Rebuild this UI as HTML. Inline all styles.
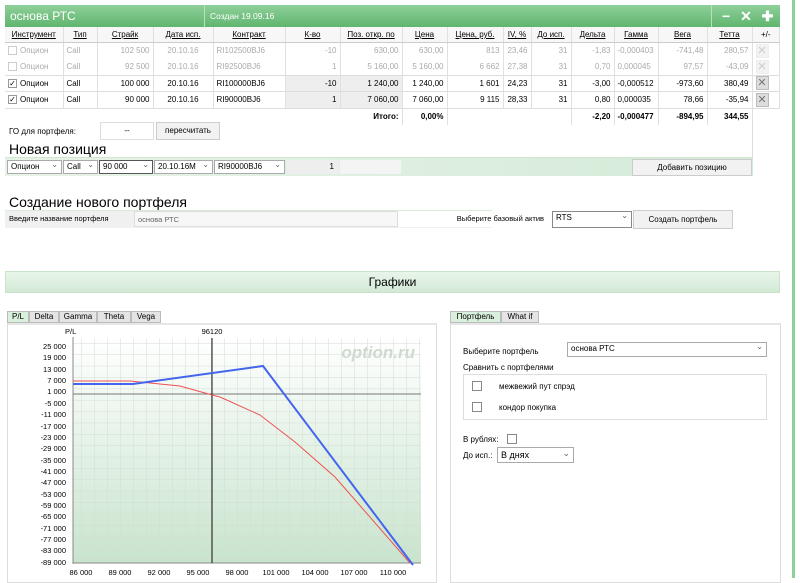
<!DOCTYPE html>
<html><head><meta charset="utf-8"><style>
*{box-sizing:border-box;margin:0;padding:0}
body{width:800px;height:578px;background:#fff;font-family:"Liberation Sans",sans-serif;font-size:8px;color:#000;position:relative;overflow:hidden}
.a{position:absolute}
.hdr{left:5px;top:5px;width:775px;height:22px;background:linear-gradient(#8fd09a,#5fb56e);color:#fff}
table{border-collapse:collapse;position:absolute;left:5px;top:27px;width:775px;font-size:8px}
td,th{border-right:1px solid #e0e0e0;padding:0 3px;height:16.5px;white-space:nowrap}
th{font-weight:normal;text-decoration:underline;text-align:center;height:15px;border-bottom:1px solid #ccc;background:#f7f7f7}
tr.g td{color:#aaa}
tr.b td{border-top:1px solid #ddd;border-bottom:1px solid #ddd}
.r{text-align:right}.c{text-align:center}
.cb{display:inline-block;width:9px;height:9px;border:1px solid #999;vertical-align:middle;margin-right:3px;font-size:8px;line-height:7px;text-align:center}
.x{display:inline-block;width:13px;height:14px;background:#ddd;color:#777;text-align:center;line-height:13px;font-size:11px;border:1px solid #bbb}
.sel{border:1px solid #aaa;background:#fff;height:14px;line-height:12px;padding-left:3px;position:absolute}
.sel:after{content:"⌄";position:absolute;right:3px;top:-2px;color:#666}
.btn{border:1px solid #ccc;background:#f2f2f2;text-align:center;position:absolute}
</style></head><body>
<div class="a" style="left:792px;top:0;width:3px;height:578px;background:#8fd09a"></div>
<div class="a hdr">
 <div class="a" style="left:5px;top:4px;font-size:12px">основа РТС</div>
 <div class="a" style="left:199px;top:0;width:1px;height:22px;background:#b7e0bd"></div>
 <div class="a" style="left:205px;top:6px;font-size:8.5px">Создан 19.09.16</div>
 <div class="a" style="left:706px;top:0;width:1px;height:22px;background:#b7e0bd"></div>
 <div class="a" style="left:717px;top:3px;font-size:14px;font-weight:bold;letter-spacing:3px">− ✕ ✚</div>
</div>
<table>
<tr><th style="width:58px">Инструмент</th><th style="width:34px">Тип</th><th style="width:56px">Страйк</th><th style="width:60px">Дата исп.</th><th style="width:72px">Контракт</th><th style="width:55px">К-во</th><th style="width:62px">Поз. откр. по</th><th style="width:45px">Цена</th><th style="width:56px">Цена, руб.</th><th style="width:28px">IV, %</th><th style="width:40px">До исп.</th><th style="width:43px">Дельта</th><th style="width:44px">Гамма</th><th style="width:49px">Вега</th><th style="width:45px">Тетта</th><th style="text-decoration:none">+/-</th></tr>
<tr class="g"><td><span class="cb" style="border-color:#ccc"></span>Опцион</td><td>Call</td><td class="r">102 500</td><td class="c">20.10.16</td><td>RI102500BJ6</td><td class="r">-10</td><td class="r">630,00</td><td class="r">630,00</td><td class="r">813</td><td class="r">23,46</td><td class="r">31</td><td class="r">-1,83</td><td>-0,000403</td><td class="r">-741,48</td><td class="r">280,57</td><td><span class="x" style="background:#f2f2f2;color:#ccc;border-color:#eee">✕</span></td></tr>
<tr class="g"><td><span class="cb" style="border-color:#ccc"></span>Опцион</td><td>Call</td><td class="r">92 500</td><td class="c">20.10.16</td><td>RI92500BJ6</td><td class="r">1</td><td class="r">5 160,00</td><td class="r">5 160,00</td><td class="r">6 662</td><td class="r">27,38</td><td class="r">31</td><td class="r">0,70</td><td>0,000045</td><td class="r">97,57</td><td class="r">-43,09</td><td><span class="x" style="background:#f2f2f2;color:#ccc;border-color:#eee">✕</span></td></tr>
<tr class="b"><td><span class="cb">✓</span>Опцион</td><td>Call</td><td class="r">100 000</td><td class="c">20.10.16</td><td>RI100000BJ6</td><td class="r" style="background:#eee">-10</td><td class="r" style="background:#eee">1 240,00</td><td class="r">1 240,00</td><td class="r">1 601</td><td class="r">24,23</td><td class="r">31</td><td class="r">-3,00</td><td>-0,000512</td><td class="r">-973,60</td><td class="r">380,49</td><td><span class="x">✕</span></td></tr>
<tr class="b"><td><span class="cb">✓</span>Опцион</td><td>Call</td><td class="r">90 000</td><td class="c">20.10.16</td><td>RI90000BJ6</td><td class="r" style="background:#eee">1</td><td class="r" style="background:#eee">7 060,00</td><td class="r">7 060,00</td><td class="r">9 115</td><td class="r">28,33</td><td class="r">31</td><td class="r">0,80</td><td>0,000035</td><td class="r">78,66</td><td class="r">-35,94</td><td><span class="x">✕</span></td></tr>
<tr style="font-weight:bold"><td colspan="7" class="r" style="height:11px">Итого:</td><td class="r">0,00%</td><td colspan="3"></td><td class="r">-2,20</td><td>-0,000477</td><td class="r">-894,95</td><td class="r">344,55</td><td style="border:none"></td></tr>
</table>
<div class="a" style="left:752px;top:118px;width:1px;height:40px;background:#ddd"></div>
<div class="a" style="left:9px;top:127px">ГО для портфеля:</div>
<div class="a" style="left:100px;top:122px;width:54px;height:18px;border:1px solid #ddd;text-align:center;line-height:16px">--</div>
<div class="btn" style="left:156px;top:122px;width:64px;height:18px;line-height:16px">пересчитать</div>
<div class="a" style="left:9px;top:141px;font-size:14px">Новая позиция</div>
<div class="a" style="left:5px;top:157px;width:748px;height:19px;background:linear-gradient(90deg,#e8f3e8,#d5ebd8);border-top:1px solid #cfe6cf"></div>
<div class="sel" style="left:7px;top:160px;width:55px;font-size:8px">Опцион</div>
<div class="sel" style="left:63px;top:160px;width:35px">Call</div>
<div class="sel" style="left:99px;top:160px;width:54px;border-color:#555">90 000</div>
<div class="sel" style="left:154px;top:160px;width:59px">20.10.16M</div>
<div class="sel" style="left:214px;top:160px;width:71px">RI90000BJ6</div>
<div class="a" style="left:287px;top:160px;width:52px;height:14px;background:#eee;text-align:right;padding-right:5px;line-height:14px">1</div>
<div class="a" style="left:340px;top:160px;width:61px;height:14px;background:#f4f4f4"></div>
<div class="btn" style="left:632px;top:159px;width:120px;height:17px;line-height:15px">Добавить позицию</div>

<div class="a" style="left:9px;top:194px;font-size:14px">Создание нового портфеля</div>
<div class="a" style="left:5px;top:210px;width:487px;height:18px;background:#f0f0f0;border-top:1px solid #d8ead8"></div>
<div class="a" style="left:9px;top:214px;font-size:7.5px">Введите название портфеля</div>
<div class="a" style="left:134px;top:211px;width:264px;height:16px;border:1px solid #ddd;background:#f7f7f7;color:#666;padding:3px;font-size:7.5px">основа РТС</div>
<div class="a" style="left:398px;top:211px;width:150px;height:16px;background:#fff;text-align:right;padding:3px 4px;font-size:7.5px">Выберите базовый актив</div>
<div class="sel" style="left:552px;top:211px;width:80px;height:17px;border-color:#888">RTS</div>
<div class="btn" style="left:633px;top:210px;width:100px;height:19px;line-height:17px">Создать портфель</div>

<div class="a" style="left:5px;top:271px;width:775px;height:22px;background:linear-gradient(#e9f5ea,#d2ead5);border:1px solid #c8e2cb;text-align:center;font-size:12px;line-height:20px">Графики</div>

<div class="a" style="left:7px;top:311px;width:22px;height:12px;background:#d8f0dc;border:1px solid #bbb;text-align:center;line-height:10px">P/L</div>
<div class="a" style="left:29px;top:311px;width:30px;height:12px;background:#e4e4e4;border:1px solid #bbb;text-align:center;line-height:10px">Delta</div>
<div class="a" style="left:59px;top:311px;width:38px;height:12px;background:#e4e4e4;border:1px solid #bbb;text-align:center;line-height:10px">Gamma</div>
<div class="a" style="left:97px;top:311px;width:34px;height:12px;background:#e4e4e4;border:1px solid #bbb;text-align:center;line-height:10px">Theta</div>
<div class="a" style="left:131px;top:311px;width:30px;height:12px;background:#e4e4e4;border:1px solid #bbb;text-align:center;line-height:10px">Vega</div>
<div class="a" style="left:7px;top:323px;width:430px;height:260px;border:1px solid #ddd;border-top:2px solid #e6e6e6"></div>
<svg class="a" style="left:0;top:0" width="440" height="578" font-family="Liberation Sans" font-size="7.5">
<defs><linearGradient id="gg" x1="0" y1="0" x2="0" y2="1"><stop offset="0" stop-color="#fff"/><stop offset="1" stop-color="#c8e4cd"/></linearGradient>
<pattern id="gp" x="3" y="2" width="13" height="11.37" patternUnits="userSpaceOnUse"><path d="M0 0H13M0 0V11.37" stroke="#d4dcd4" stroke-width="1" fill="none"/></pattern></defs>
<rect x="73" y="338" width="348" height="225" fill="url(#gg)"/>
<rect x="73" y="338" width="348" height="225" fill="url(#gp)"/>
<text x="415" y="358" font-size="17" font-weight="bold" font-style="italic" fill="#d0d8d0" text-anchor="end">option.ru</text>
<line x1="73" y1="337" x2="73" y2="564" stroke="#888"/>
<line x1="73" y1="563" x2="421" y2="563" stroke="#888"/>
<line x1="73" y1="394" x2="421" y2="394" stroke="#777"/>
<line x1="212" y1="338" x2="212" y2="563" stroke="#111"/>
<text x="212" y="334" text-anchor="middle">96120</text>
<text x="65" y="334">P/L</text>
<g text-anchor="end">
<text x="66" y="349">25 000</text><text x="66" y="360">19 000</text><text x="66" y="372">13 000</text><text x="66" y="383">7 000</text><text x="66" y="394">1 000</text><text x="66" y="406">-5 000</text><text x="66" y="417">-11 000</text><text x="66" y="429">-17 000</text><text x="66" y="440">-23 000</text><text x="66" y="451">-29 000</text><text x="66" y="463">-35 000</text><text x="66" y="474">-41 000</text><text x="66" y="485">-47 000</text><text x="66" y="497">-53 000</text><text x="66" y="508">-59 000</text><text x="66" y="519">-65 000</text><text x="66" y="531">-71 000</text><text x="66" y="542">-77 000</text><text x="66" y="553">-83 000</text><text x="66" y="565">-89 000</text></g>
<g text-anchor="middle"><text x="81" y="575">86 000</text><text x="120" y="575">89 000</text><text x="159" y="575">92 000</text><text x="198" y="575">95 000</text><text x="237" y="575">98 000</text><text x="276" y="575">101 000</text><text x="315" y="575">104 000</text><text x="354" y="575">107 000</text><text x="393" y="575">110 000</text></g>
<polyline points="73,381 130,381 180,386 212,395 220,397 260,415 295,442 335,477 410,563" fill="none" stroke="#f05050" stroke-width="1"/>
<polyline points="73,384 133,384 263,366 413,565" fill="none" stroke="#4466ee" stroke-width="2"/>
</svg>

<div class="a" style="left:450px;top:311px;width:51px;height:12px;background:#d8f0dc;border:1px solid #bbb;text-align:center;line-height:10px">Портфель</div>
<div class="a" style="left:501px;top:311px;width:38px;height:12px;background:#e4e4e4;border:1px solid #bbb;text-align:center;line-height:10px">What if</div>
<div class="a" style="left:450px;top:323px;width:331px;height:260px;border:1px solid #ddd;border-top:2px solid #e6e6e6"></div>
<div class="a" style="left:463px;top:347px">Выберите портфель</div>
<div class="sel" style="left:567px;top:342px;width:200px;height:15px">основа РТС</div>
<div class="a" style="left:463px;top:363px">Сравнить с портфелями</div>
<div class="a" style="left:463px;top:374px;width:304px;height:46px;border:1px solid #ddd"></div>
<div class="a" style="left:472px;top:381px;width:10px;height:10px;border:1px solid #888"></div>
<div class="a" style="left:499px;top:382px">межвежий пут спрэд</div>
<div class="a" style="left:472px;top:402px;width:10px;height:10px;border:1px solid #888"></div>
<div class="a" style="left:499px;top:403px">кондор покупка</div>
<div class="a" style="left:463px;top:435px">В рублях:</div>
<div class="a" style="left:507px;top:434px;width:10px;height:10px;border:1px solid #888"></div>
<div class="a" style="left:463px;top:451px">До исп.:</div>
<div class="sel" style="left:497px;top:447px;width:77px;height:16px;line-height:14px;font-size:9px">В днях</div>
</body></html>
